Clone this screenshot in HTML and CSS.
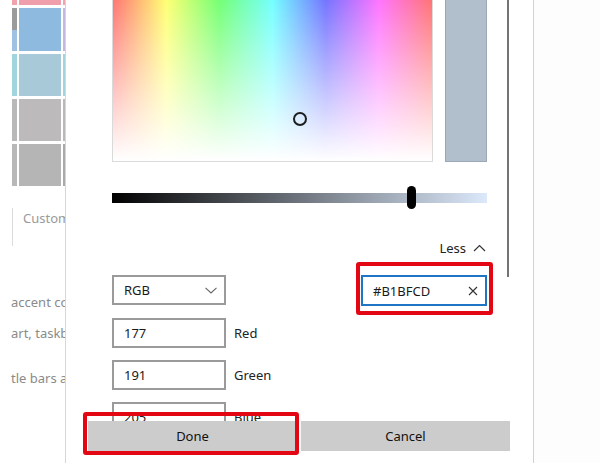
FILE: index.html
```html
<!DOCTYPE html>
<html lang="en">
<head>
<meta charset="utf-8">
<title>Custom accent color</title>
<link rel="stylesheet" href="styles.css">
</head>
<body>
<div class="screen">
  <div class="bgpage">
    <div class="swatches">
      <div class="sw pink"></div><div class="sw pink2"></div><div class="sw pink"></div>
      <div class="sw mix"></div><div class="sw blue"></div><div class="sw lav"></div>
      <div class="sw teal"></div><div class="sw teal2"></div><div class="sw teal"></div>
      <div class="sw grey1"></div><div class="sw grey2"></div><div class="sw grey1"></div>
      <div class="sw grey3"></div><div class="sw grey4"></div><div class="sw grey5"></div>
    </div>
    <div class="custom">Custom</div>
    <p class="desc d1">accent co</p>
    <p class="desc d2">art, taskb</p>
    <p class="desc d3">tle bars a</p>
  </div>

  <div class="dialog">
    <div class="scroll">
      <div class="pickrow">
        <div class="spectrum"><span class="marker"></span></div>
        <div class="preview"></div>
      </div>
      <div class="slider"><span class="thumb"></span></div>
      <div class="lessrow">
        <span class="less">Less</span>
        <svg class="chev-up" width="13" height="8" viewBox="0 0 13 8"><polyline points="1,7 6.5,1.5 12,7" fill="none" stroke="#333" stroke-width="1.2"/></svg>
      </div>
      <div class="fieldrow">
        <div class="select"><span>RGB</span>
          <svg width="12" height="7" viewBox="0 0 12 7"><polyline points="0.5,0.8 6,6 11.5,0.8" fill="none" stroke="#666" stroke-width="1.1"/></svg>
        </div>
        <div class="hex"><span>#B1BFCD</span>
          <svg width="10" height="10" viewBox="0 0 10 10"><path d="M1 1 L9 9 M9 1 L1 9" stroke="#333" stroke-width="1.1"/></svg>
        </div>
      </div>
      <div class="channel"><div class="box">177</div><span class="lbl">Red</span></div>
      <div class="channel"><div class="box">191</div><span class="lbl">Green</span></div>
      <div class="channel"><div class="box">205</div><span class="lbl">Blue</span></div>
    </div>
    <div class="scrollbar"></div>
    <div class="footer">
      <button class="btn done">Done</button>
      <button class="btn">Cancel</button>
    </div>
  </div>

  <div class="rightpane"></div>
</div>
</body>
</html>
```

FILE: styles.css
```css
* { box-sizing: border-box; }

html, body {
  margin: 0;
  padding: 0;
  background: #fff;
}

body {
  font-family: "Noto Sans", "Open Sans", sans-serif;
  font-size: 13px;
  color: #1a1a1a;
}

.screen {
  display: flex;
  width: 600px;
  height: 463px;
  overflow: hidden;
}

/* background settings page */
.bgpage {
  flex: none;
  width: 65px;
  overflow: hidden;
  background: #fff;
}

.swatches {
  display: grid;
  grid-template-columns: 5px 42px 42px;
  grid-template-rows: 5px 43px 42px 42px 42px;
  column-gap: 2px;
  row-gap: 3px;
  margin-left: 12px;
}

.pink  { background: #f0a2ad; }
.pink2 { background: #ef9fab; }
.mix   { background: linear-gradient(#9b9b9b 0 22px, #9fc2e2 22px); }
.blue  { background: #8fbadf; }
.lav   { background: #c4b6e2; }
.teal  { background: #a0d5de; }
.teal2 { background: #a8cad8; }
.grey1 { background: #bab9b9; }
.grey2 { background: #bcbaba; }
.grey3 { background: #b8b8b8; }
.grey4 { background: #b5b5b5; }
.grey5 { background: #a9a9a9; }

.custom {
  margin: 22px 0 0 12px;
  height: 38px;
  border-left: 1px solid #dcdcdc;
  padding-left: 10px;
  line-height: 20px;
  color: #9a9a9a;
  white-space: nowrap;
  overflow: hidden;
}

.desc {
  margin: 0;
  padding-left: 11px;
  line-height: 20px;
  color: #8a8a8a;
  white-space: nowrap;
  overflow: hidden;
}
.d1 { margin-top: 46px; }
.d2 { margin-top: 11px; }
.d3 { margin-top: 25px; }

/* dialog */
.dialog {
  flex: none;
  width: 469px;
  height: 463px;
  position: relative;
  display: flex;
  flex-direction: column;
  background: #fff;
  border-left: 1px solid #d6d6d6;
  border-right: 1px solid #d2d2d2;
}

.scroll {
  height: 421px;
  overflow: hidden;
  padding-left: 46px;
}

.pickrow {
  display: flex;
  gap: 12px;
  height: 162px;
}

.spectrum {
  position: relative;
  width: 321px;
  height: 162px;
  border: 1px solid #dadada;
  border-top: none;
  background:
    linear-gradient(to bottom, rgba(255,255,255,0.46), #fff),
    linear-gradient(to right, #f00, #ff0, #0f0, #0ff, #00f, #f0f, #f00);
}

.marker {
  position: absolute;
  left: 180px;
  top: 112px;
  width: 14px;
  height: 14px;
  border: 2px solid #1e1e1e;
  border-radius: 50%;
}

.preview {
  width: 42px;
  height: 162px;
  background: #b1bfcd;
  border: 1px solid #9ba7b4;
  border-top: none;
}

.slider {
  position: relative;
  width: 375px;
  height: 10px;
  margin-top: 31px;
  background: linear-gradient(to right, #000, #dce9fb);
}

.thumb {
  position: absolute;
  left: 295px;
  top: -7px;
  width: 9px;
  height: 23px;
  border-radius: 5px;
  background: #000;
}

.lessrow {
  width: 375px;
  height: 20px;
  margin-top: 35px;
  display: flex;
  align-items: center;
  justify-content: flex-end;
  gap: 7px;
  padding-right: 1px;
  color: #222;
}

.chev-up { display: block; }

.fieldrow {
  width: 375px;
  margin-top: 17px;
  display: flex;
  justify-content: space-between;
  align-items: flex-start;
}

.select {
  width: 114px;
  height: 30px;
  border: 2px solid #9a9a9a;
  padding: 0 7px 0 10px;
  display: flex;
  align-items: center;
  justify-content: space-between;
}

.hex {
  position: relative;
  width: 126px;
  height: 31px;
  border: 2px solid #1f75c5;
  padding: 0 7px 0 10px;
  display: flex;
  align-items: center;
  justify-content: space-between;
}

.hex::after {
  content: "";
  position: absolute;
  top: -15px;
  left: -7px;
  right: -8px;
  bottom: -11px;
  border: 4px solid #e30613;
  border-radius: 3px;
}

.channel {
  display: flex;
  align-items: center;
  margin-top: 12px;
}

.box {
  width: 114px;
  height: 30px;
  border: 2px solid #9a9a9a;
  padding-left: 10px;
  line-height: 26px;
}

.lbl {
  margin-left: 8px;
  color: #222;
}

.scrollbar {
  position: absolute;
  left: 441px;
  top: 0;
  width: 2px;
  height: 277px;
  background: #747474;
}

.footer {
  display: flex;
  gap: 4px;
  padding: 0 23px 0 22px;
}

.btn {
  flex: 1;
  height: 30px;
  border: none;
  background: #cccccc;
  font: inherit;
  color: #111;
  padding: 0;
}

.done { position: relative; }

.done::after {
  content: "";
  position: absolute;
  top: -9px;
  left: -5px;
  right: -2px;
  bottom: -4px;
  border: 4px solid #e30613;
  border-radius: 3px;
}

.rightpane {
  flex: 1;
  background: #fdfdfd;
}
```
